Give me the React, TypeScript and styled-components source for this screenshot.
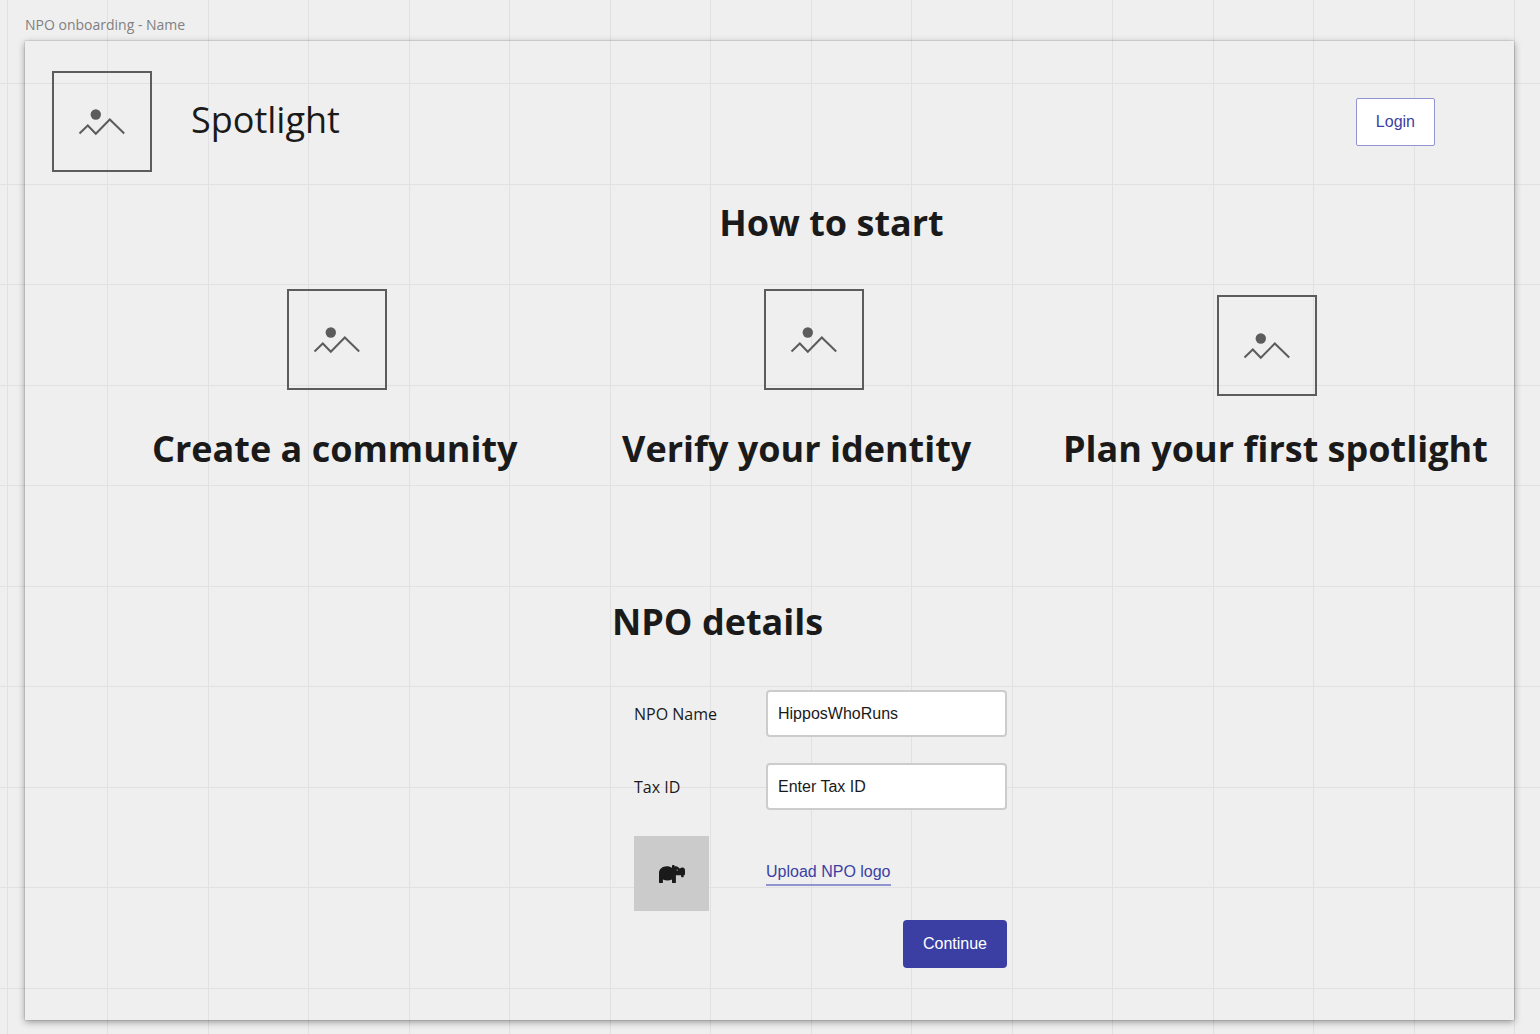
import React from 'react';
import styled, { createGlobalStyle } from 'styled-components';
import { FaHippo } from 'react-icons/fa';

const ink = '#1a1a1a';
const indigo = '#3b3fa3';
const line = '#e1e1e1';
const sans = "'Open Sans', 'Noto Sans', sans-serif";
const control = "'Liberation Sans', Arial, sans-serif";

const GlobalStyle = createGlobalStyle`
  *, *::before, *::after { box-sizing: border-box; }
  body {
    margin: 0;
    background-color: #efefef;
    color: ${ink};
    font-family: ${sans};
  }
`;

const Canvas = styled.div`
  min-height: 100vh;
  padding: 16px 26px 14px 25px;
  background-image:
    linear-gradient(90deg, ${line} 0 1px, transparent 1px 100px, ${line} 100px 101px, transparent 101px),
    linear-gradient(180deg, ${line} 0 1px, transparent 1px 100px, ${line} 100px 101px, transparent 101px);
  background-size: 201px 201px;
  background-position: 7px 0, 0 -17px;
`;

const FrameTitle = styled.div`
  height: 25px;
  font-size: 14px;
  line-height: 18px;
  color: #808080;
`;

const Frame = styled.main`
  padding: 30px 0 52px;
  box-shadow: 0 0 1px rgba(0, 0, 0, 0.4), 0 2px 7px rgba(0, 0, 0, 0.38);
`;

const Header = styled.header`
  display: flex;
  align-items: center;
  gap: 39px;
  padding: 0 79px 0 27px;
`;

const Brand = styled.span`
  flex: 1;
  padding-bottom: 3px;
  font-size: 36px;
  line-height: 50px;
`;

const Picture = styled.svg`
  display: block;
  flex: none;
  width: 100px;
  height: 101px;
`;

const Heading = styled.h2`
  margin: 0;
  font-size: 36px;
  line-height: 50px;
  font-weight: 700;
  white-space: nowrap;
`;

const StartHeading = styled(Heading)`
  margin-top: 26px;
  padding-left: 124px;
  text-align: center;
`;

const Steps = styled.section`
  display: grid;
  grid-template-columns: 470fr 441fr 426fr;
  margin-top: 41px;
  padding: 0 25px 0 127px;
`;

const Step = styled.article`
  min-width: 0;
`;

const StepArt = styled.div<{ $indent: number; $align: 'start' | 'end' }>`
  display: flex;
  height: 107px;
  align-items: ${({ $align }) => $align};
  padding-left: ${({ $indent }) => $indent}px;
  margin-bottom: 28px;
`;

const Details = styled.section`
  padding-left: 80px;
  margin-top: 123px;
`;

const DetailsBody = styled.div`
  width: 395px;
  margin: 0 auto;
`;

const Form = styled.form`
  display: grid;
  grid-template-columns: 132px 1fr;
  align-items: center;
  row-gap: 26px;
  margin-top: 43px;
  padding-left: 22px;
`;

const Label = styled.label`
  font-size: 16px;
  line-height: 22px;
`;

const Field = styled.input`
  width: 100%;
  height: 47px;
  padding: 0 10px;
  border: 2px solid #cccccc;
  border-radius: 4px;
  background: #fff;
  color: ${ink};
  font: 16px ${control};
  outline: none;

  &::placeholder {
    color: ${ink};
    opacity: 1;
  }
`;

const LogoTile = styled.div`
  display: flex;
  align-items: center;
  justify-content: center;
  width: 75px;
  height: 75px;
  background: #cbcbcb;
`;

const UploadLink = styled.a`
  justify-self: start;
  padding-bottom: 1px;
  border-bottom: 2px solid #9195cf;
  color: ${indigo};
  font: 16px/22px ${control};
  text-decoration: none;
`;

const Button = styled.button<{ $primary?: boolean }>`
  height: 48px;
  padding: 0 ${({ $primary }) => ($primary ? 20 : 19)}px;
  border: ${({ $primary }) => ($primary ? 'none' : '1px solid #9195cf')};
  border-radius: ${({ $primary }) => ($primary ? 4 : 2)}px;
  background: ${({ $primary }) => ($primary ? indigo : '#fff')};
  color: ${({ $primary }) => ($primary ? '#fff' : indigo)};
  font: 16px ${control};
  cursor: pointer;
`;

const Actions = styled.div`
  display: flex;
  justify-content: flex-end;
  margin-top: 9px;
`;

function ImagePlaceholder() {
  return (
    <Picture viewBox="0 0 100 101" fill="none" aria-hidden="true">
      <rect x="1" y="1" width="98" height="99" stroke="#5c5c5c" strokeWidth="2" />
      <circle cx="43.8" cy="43.5" r="5.2" fill="#5c5c5c" />
      <path d="M27.5 62.5 L35.8 54.5 L43.8 62.8 L57.8 48.5 L72.2 62.5" stroke="#5c5c5c" strokeWidth="2" />
    </Picture>
  );
}

const steps: { title: string; indent: number; align: 'start' | 'end' }[] = [
  { title: 'Create a community', indent: 135, align: 'start' },
  { title: 'Verify your identity', indent: 142, align: 'start' },
  { title: 'Plan your first spotlight', indent: 154, align: 'end' },
];

export default function App() {
  return (
    <>
      <GlobalStyle />
      <Canvas>
        <FrameTitle>NPO onboarding - Name</FrameTitle>
        <Frame>
          <Header>
            <ImagePlaceholder />
            <Brand>Spotlight</Brand>
            <Button type="button">Login</Button>
          </Header>

          <StartHeading>How to start</StartHeading>
          <Steps>
            {steps.map((step) => (
              <Step key={step.title}>
                <StepArt $indent={step.indent} $align={step.align}>
                  <ImagePlaceholder />
                </StepArt>
                <Heading as="h3">{step.title}</Heading>
              </Step>
            ))}
          </Steps>

          <Details>
            <DetailsBody>
              <Heading>NPO details</Heading>
              <Form id="npo-form" onSubmit={(event) => event.preventDefault()}>
                <Label htmlFor="npo-name">NPO Name</Label>
                <Field id="npo-name" type="text" defaultValue="HipposWhoRuns" />
                <Label htmlFor="tax-id">Tax ID</Label>
                <Field id="tax-id" type="text" placeholder="Enter Tax ID" />
                <LogoTile>
                  <FaHippo size={26} aria-hidden="true" />
                </LogoTile>
                <UploadLink href="#upload">Upload NPO logo</UploadLink>
              </Form>
              <Actions>
                <Button $primary type="submit" form="npo-form">
                  Continue
                </Button>
              </Actions>
            </DetailsBody>
          </Details>
        </Frame>
      </Canvas>
    </>
  );
}
